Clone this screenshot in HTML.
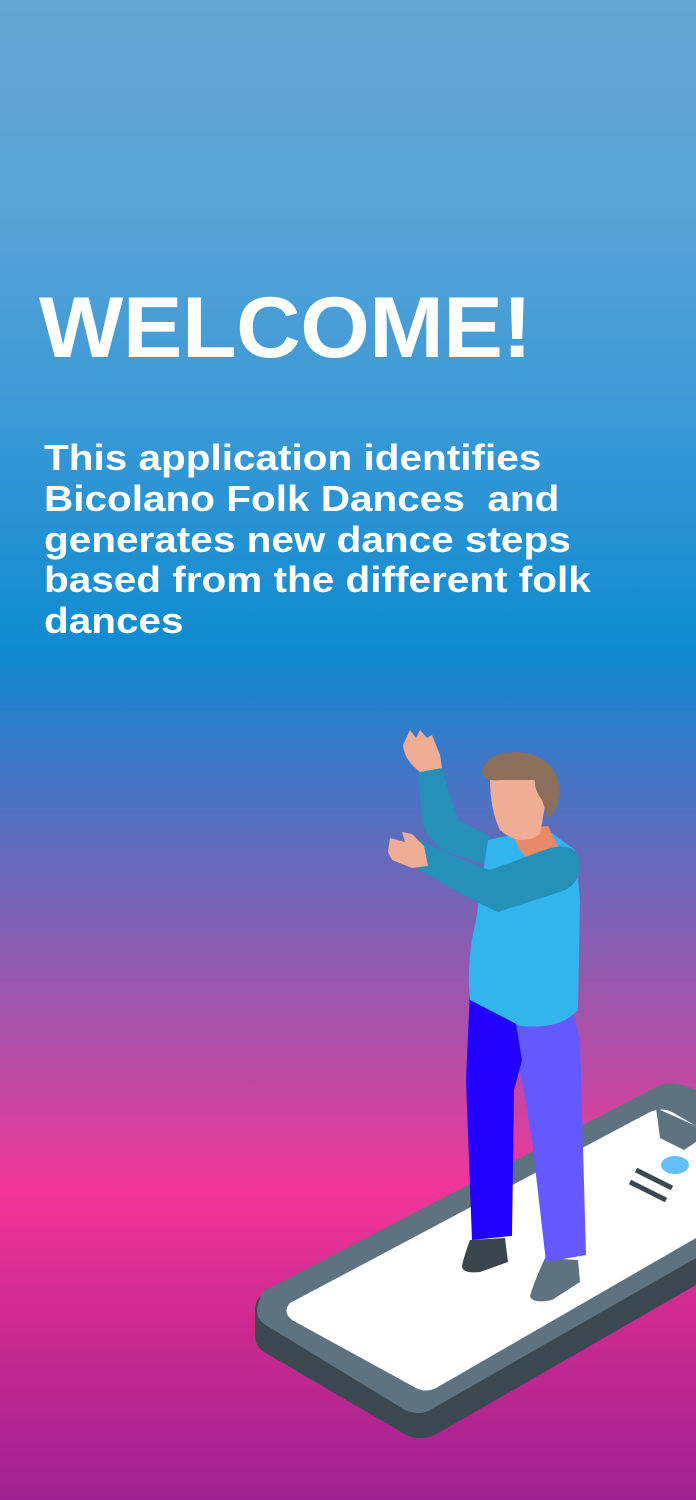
<!DOCTYPE html>
<html><head><meta charset="utf-8"><style>
html,body{margin:0;padding:0}
body{width:696px;height:1500px;position:relative;overflow:hidden;font-family:"Liberation Sans",sans-serif;
background:linear-gradient(180deg,#64a6d4 0px,#5aa3d5 200px,#3e9ad6 400px,#0f8bd0 650px,#3979c8 750px,#7664b6 900px,#b24ea6 1050px,#f33597 1190px,#cc2a90 1320px,#9f2191 1500px);}
h1{position:absolute;left:39px;top:278px;margin:0;color:#fff;font-size:86px;font-weight:bold;letter-spacing:-0.5px;line-height:100px;transform:scaleX(1.04);transform-origin:0 0}
p{position:absolute;left:44px;top:438px;margin:0;color:#fff;font-size:36px;font-weight:bold;line-height:40.8px;letter-spacing:0;white-space:nowrap;transform:scaleX(1.125);transform-origin:0 0}
svg{position:absolute;left:0;top:0}
</style></head><body>
<h1>WELCOME!</h1>
<p>This application identifies<br>Bicolano Folk Dances&nbsp; and<br>generates new dance steps<br>based from the different folk<br>dances</p>
<svg width="696" height="1500" viewBox="0 0 696 1500">
<path d="M262 1295 L660 1088 Q676 1082 696 1092 L696 1285 L440 1432 Q425 1442 408 1436 L264 1352 Q255 1346 255 1335 L255 1308 Q256 1299 262 1295Z" fill="#3c4850"/>
<path d="M262 1292 L660 1085 Q676 1080 696 1090 L696 1258 L430 1410 Q420 1416 405 1410 L264 1324 Q256 1318 257 1308 Z" fill="#5f7280"/>
<path d="M290 1303 L650 1112 Q662 1107 672 1112 L696 1126 L696 1238 L436 1388 Q426 1393 416 1388 L292 1320 Q282 1312 290 1303Z" fill="#fff"/>
<path d="M656 1108 L696 1126 L696 1142 L684 1150 L660 1138 Z" fill="#5f7280"/>
<line x1="636" y1="1170" x2="672" y2="1188" stroke="#3c4850" stroke-width="5"/>
<line x1="630" y1="1182" x2="666" y2="1200" stroke="#3c4850" stroke-width="5"/>
<ellipse cx="675" cy="1165" rx="14" ry="9" fill="#63c0fb"/>
<path d="M470 1240 L505 1238 L508 1262 L480 1272 Q462 1274 462 1266 Q464 1256 470 1240Z" fill="#3a464e"/>
<path d="M545 1258 L578 1260 L580 1282 L552 1300 Q532 1304 530 1296 Q534 1282 545 1258Z" fill="#5f7280"/>
<path d="M510 1000 L570 1000 L580 1040 L586 1255 L546 1262 L532 1140 L522 1080 L514 1060Z" fill="#6459ff"/>
<path d="M470 990 L512 1000 L522 1060 L514 1090 L512 1236 L472 1240 L466 1080Z" fill="#2200ff"/>
<path d="M418 770 L440 764 L458 820 L490 836 L484 864 L446 852 Q426 840 422 820Z" fill="#2590b8"/>
<path d="M403 745 L410 730 L416 738 L420 730 L427 738 L432 735 L440 755 L442 768 L420 772 Q404 760 403 745Z" fill="#f0ad96"/>
<path d="M488 840 L545 828 L575 850 L580 900 L578 1010 Q560 1030 520 1026 L470 1000 Q466 960 476 920 Z" fill="#31b5ec"/>
<path d="M512 830 L548 826 L560 850 L535 862 Q518 856 512 830Z" fill="#e8886a"/>
<path d="M420 840 Q460 860 490 870 L550 848 Q575 842 580 860 Q582 885 560 892 L498 912 Q470 900 420 870Z" fill="#2590b8"/>
<path d="M390 838 L405 842 L402 832 L412 834 L424 846 L428 866 L412 868 L392 860 L388 852Z" fill="#f0ad96"/>
<path d="M490 778 Q490 810 500 830 Q520 848 540 834 L548 790 L520 770Z" fill="#f0ad96"/>
<path d="M482 772 Q486 752 516 752 Q556 754 560 790 Q558 812 548 818 L542 800 Q534 790 535 780 L500 780 Q484 782 482 772Z" fill="#8b6e5c"/>
</svg>
</body></html>
